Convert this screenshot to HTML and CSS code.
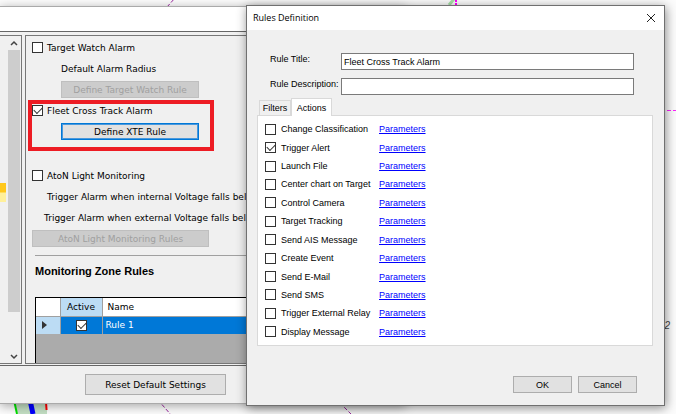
FILE: index.html
```html
<!DOCTYPE html>
<html lang="en">
<head>
<meta charset="utf-8">
<title>Rules Definition</title>
<link rel="stylesheet" href="styles.css">
</head>
<body>
<div class="desktop">
  <svg class="chart" viewBox="0 0 676 414" preserveAspectRatio="xMinYMin slice" aria-hidden="true">
    <rect width="676" height="414" fill="#fcfcfc"/>
    <path d="M14 400H47V414H18Z" fill="#c3dfc3"/>
    <path d="M14 400l3 14" stroke="#00e000" stroke-width="2"/>
    <path d="M30 400l3 14" stroke="#0000ff" stroke-width="5"/>
    <path d="M46 402l1 14" stroke="#ff0000" stroke-width="2" stroke-dasharray="8 4"/>
    <path d="M158 400l14 16M340 403l12 12M167 7l8-9" stroke="#9c27a0" stroke-dasharray="4 2"/>
    <path d="M449 5l5-6" stroke="#a8e0a8" stroke-width="3"/>
    <path d="M456 0v6" stroke="#ff00ff" stroke-width="2" stroke-dasharray="2 1"/>
    <path d="M667 110.500h10" stroke="#ff20ff" stroke-dasharray="4 2"/>
  </svg>

  <main class="settings">
    <div class="settings-head"></div>
    <div class="settings-body">
      <div class="nav">
        <div class="nav-list"><div class="nav-selected"></div></div>
        <div class="scrollbar">
          <svg viewBox="0 0 12 14"><path d="M3 9l3-3 3 3" fill="none" stroke="#444" stroke-width="1.500"/></svg>
          <div class="thumb"></div>
          <svg viewBox="0 0 12 14"><path d="M3 6l3 3 3-3" fill="none" stroke="#444" stroke-width="1.500"/></svg>
        </div>
      </div>
      <section class="alarms">
        <label class="line"><input type="checkbox">Target Watch Alarm</label>
        <div class="line indent-2">Default Alarm Radius</div>
        <div class="line indent-2"><button class="btn medium" disabled>Define Target Watch Rule</button></div>
        <div class="group">
          <label class="line"><input type="checkbox" checked>Fleet Cross Track Alarm</label>
          <div class="line indent-2"><button class="btn medium focused">Define XTE Rule</button></div>
          <div class="highlight"></div>
        </div>
        <label class="line"><input type="checkbox">AtoN Light Monitoring</label>
        <div class="line indent-1">Trigger Alarm when internal Voltage falls below</div>
        <div class="line indent-0">Trigger Alarm when external Voltage falls below</div>
        <div class="line"><button class="btn wide" disabled>AtoN Light Monitoring Rules</button></div>
        <h2>Monitoring Zone Rules</h2>
        <div class="rules">
          <table>
            <thead><tr><th class="marker"></th><th class="active">Active</th><th>Name</th></tr></thead>
            <tbody><tr>
              <td class="marker"><svg viewBox="0 0 5 8"><path d="M0 0l5 4-5 4z" fill="#333"/></svg></td>
              <td class="active"><input type="checkbox" checked aria-label="Rule 1 active"></td>
              <td>Rule 1</td>
            </tr></tbody>
          </table>
        </div>
      </section>
    </div>
    <footer class="settings-foot"><button class="btn reset">Reset Default Settings</button></footer>
  </main>

  <span class="sounding">2</span>

  <div class="dialog" role="dialog" aria-labelledby="dialog-title">
    <header>
      <h1 id="dialog-title">Rules Definition</h1>
      <button class="close" aria-label="Close"><svg viewBox="0 0 10 10"><path d="M1 1l8 8M9 1l-8 8" stroke="#222"/></svg></button>
    </header>
    <form>
      <div class="fields">
        <label for="rule-title">Rule Title:</label>
        <input type="text" id="rule-title" value="Fleet Cross Track Alarm">
        <label for="rule-desc">Rule Description:</label>
        <input type="text" id="rule-desc">
      </div>
      <div class="tabs" role="tablist">
        <button type="button" role="tab">Filters</button>
        <button type="button" role="tab" class="current" aria-selected="true">Actions</button>
      </div>
      <div class="actions">
        <label><input type="checkbox">Change Classification</label><a href="#">Parameters</a>
        <label><input type="checkbox" checked>Trigger Alert</label><a href="#">Parameters</a>
        <label><input type="checkbox">Launch File</label><a href="#">Parameters</a>
        <label><input type="checkbox">Center chart on Target</label><a href="#">Parameters</a>
        <label><input type="checkbox">Control Camera</label><a href="#">Parameters</a>
        <label><input type="checkbox">Target Tracking</label><a href="#">Parameters</a>
        <label><input type="checkbox">Send AIS Message</label><a href="#">Parameters</a>
        <label><input type="checkbox">Create Event</label><a href="#">Parameters</a>
        <label><input type="checkbox">Send E-Mail</label><a href="#">Parameters</a>
        <label><input type="checkbox">Send SMS</label><a href="#">Parameters</a>
        <label><input type="checkbox">Trigger External Relay</label><a href="#">Parameters</a>
        <label><input type="checkbox">Display Message</label><a href="#">Parameters</a>
      </div>
      <div class="buttons">
        <button type="button" class="btn">OK</button>
        <button type="button" class="btn">Cancel</button>
      </div>
    </form>
  </div>
</div>
</body>
</html>
```
FILE: styles.css
```css
* { box-sizing: border-box; }

body {
  margin: 0;
  font: 9px/12px "DejaVu Sans", Verdana, sans-serif;
  color: #000;
}

button, input { font: inherit; color: inherit; }

.desktop { position: relative; min-height: 100vh; overflow: hidden; }
.chart { position: absolute; inset: 0; width: 100%; height: 100%; }

input[type="checkbox"] {
  appearance: none;
  flex: none;
  display: block;
  width: 11px;
  height: 11px;
  margin: 0;
  border: 1px solid #333;
  background: #fff;
}

input[type="checkbox"]:checked::before {
  content: "";
  display: block;
  width: 7px;
  height: 4px;
  margin: 1px;
  border: solid #333;
  border-width: 0 0 1px 1px;
  transform: rotate(-45deg);
}

.btn {
  height: 17px;
  padding: 0;
  border: 1px solid #adadad;
  background: #e1e1e1;
}
.btn:disabled { border-color: #bfbfbf; background: #ccc; color: #a0a0a0; }
.btn.focused { border-color: #0078d7; box-shadow: inset 0 0 0 1px #4a98dc; }
.btn.medium { width: 138px; }
.btn.wide { width: 177px; }
.btn.reset { width: 141px; height: 21px; }

/* Settings window */
.settings {
  position: absolute;
  top: 6px;
  left: 0;
  width: 60%;
  border-top: 1px solid #aaa;
  border-bottom: 1px solid #aaa;
  background: #f0f0f0;
  box-shadow: 0 2px 10px rgba(0, 0, 0, .35);
}
.settings-head { height: 25px; background: #fff; border-bottom: 1px solid #666; }
.settings-body {
  display: flex;
  gap: 3px;
  padding: 3px 0 1px;
  border-bottom: 1px solid #666;
}

.nav { display: flex; width: 22px; border: solid #777; border-width: 1px 1px 1px 0; }
.nav-list { flex: 1; padding-top: 147px; }
.nav-selected { height: 19px; width: 6px; background: linear-gradient(#ffc81c 45%, #fff09a 55%); }
.scrollbar { display: flex; flex-direction: column; width: 12px; margin-right: 1px; }
.scrollbar svg { width: 12px; height: 14px; }
.thumb { flex: 1; margin-bottom: 37px; background: #cdcdcd; }

.alarms { flex: 1; padding: 1px 0 0 6px; border: solid #777; border-width: 1px 0 1px 1px; white-space: nowrap; }
.line { display: flex; align-items: center; gap: 4px; height: 21px; }
.indent-0 { padding-left: 12px; }
.indent-1 { padding-left: 15px; }
.indent-2 { padding-left: 29px; }

.group { position: relative; height: 65px; }
.highlight {
  position: absolute;
  top: 0;
  left: -4px;
  width: 186px;
  height: 51px;
  border: 4px solid #ed1c24;
  pointer-events: none;
}

.alarms h2 {
  margin: 6px 0 0 3px;
  padding: 7px 0 18px;
  border-top: 1px solid #a0a0a0;
  font: bold 11px/16px "Liberation Sans", Arial, sans-serif;
}

.rules { height: 66px; margin-left: 3px; border: solid #000; border-width: 1px 0 0 1px; background: #ababab; }
table { width: 100%; border-collapse: collapse; table-layout: fixed; }
th, td { height: 18px; padding: 0 3px; text-align: left; font-weight: normal; border-right: 1px solid #a0a0a0; }
th { padding-left: 5px; background: #fff; border-bottom: 1px solid #a0a0a0; }
td { background: #0078d7; color: #fff; }
.marker { width: 24px; }
td.marker { background: #bcdcf4; padding-left: 6px; }
.marker svg { display: block; width: 5px; height: 8px; }
.active { width: 42px; padding: 0; text-align: center; }
th.active { background: #bcdcf4; }
.active input { margin: 0 auto; }

.settings-foot { height: 37px; padding: 8px 0 0 85px; }

.sounding {
  position: absolute;
  top: 320px;
  right: 6px;
  font: italic 10px/12px "Liberation Sans", Arial, sans-serif;
  color: #444;
}

/* Rules dialog */
.dialog {
  position: absolute;
  top: 5px;
  left: 246px;
  right: 11px;
  border: 1px solid #707070;
  background: #f0f0f0;
  box-shadow: 1px 2px 10px rgba(0, 0, 0, .45);
  font-family: "Liberation Sans", Arial, sans-serif;
}
.dialog header {
  display: flex;
  align-items: center;
  justify-content: space-between;
  height: 24px;
  padding: 0 8px 0 6px;
  background: #fff;
}
.dialog h1 { margin: 0; font: 9px/12px "Open Sans", "Noto Sans", sans-serif; }
.close { padding: 0; border: 0; background: none; }
.close svg { display: block; width: 10px; height: 10px; }

form { padding: 23px 11px 12px 10px; }
.fields {
  display: grid;
  grid-template-columns: 71px 1fr;
  row-gap: 8px;
  margin: 0 19px 0 13px;
}
.fields label { line-height: 12px; white-space: nowrap; }
.fields input {
  width: 100%;
  height: 17px;
  padding: 0 2px;
  border: 1px solid #7a7a7a;
  background: #fff;
}

.tabs { display: flex; align-items: flex-end; margin-top: 3px; padding-left: 2px; }
.tabs button { height: 15px; width: 32px; padding: 0; border: 1px solid #d9d9d9; border-bottom: 0; background: #f0f0f0; }
.tabs .current { height: 18px; width: 41px; margin-bottom: -1px; background: #fff; }

.actions {
  display: grid;
  grid-template-columns: 114px 1fr;
  grid-auto-rows: 1fr;
  align-items: center;
  height: 231px;
  padding: 4px 7px;
  border: 1px solid #d9d9d9;
  background: #fff;
}
.actions label { display: flex; align-items: center; gap: 5px; white-space: nowrap; }
.actions a { justify-self: start; color: #00f; }

.buttons { display: flex; justify-content: flex-end; gap: 6px; margin-top: 30px; padding-right: 16px; }
.buttons .btn { width: 59px; }
```
